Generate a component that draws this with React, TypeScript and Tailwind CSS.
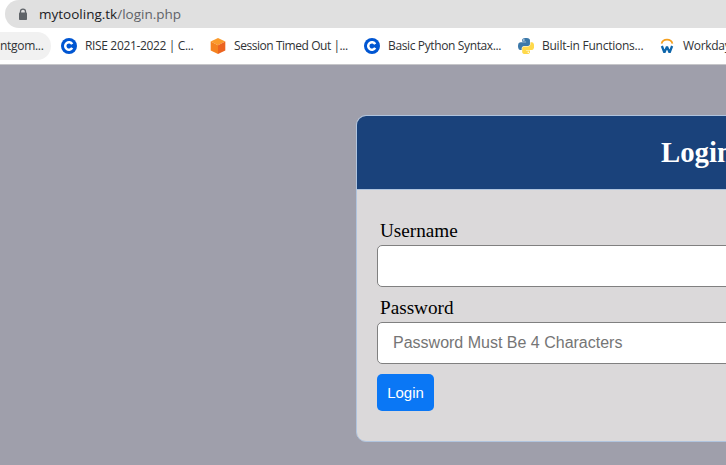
import type { ReactNode } from "react";

function CourseraIcon() {
  return (
    <svg width="16" height="16" viewBox="0 0 16 16">
      <circle cx="8" cy="8" r="8" fill="#0056d2" />
      <path d="M11.2 6.1A3.75 3.75 0 1 0 11.2 9.9" fill="none" stroke="#fff" strokeWidth="2.5" />
    </svg>
  );
}

function CubeIcon() {
  return (
    <svg width="16" height="16" viewBox="0 0 16 16">
      <path d="M8 0 15.3 3.6 8 7.3.7 3.6Z" fill="#fb9a2c" />
      <path d="M.7 3.6 8 7.3V16L.7 12.4Z" fill="#f58220" />
      <path d="M15.3 3.6 8 7.3V16l7.3-3.6Z" fill="#ec6420" />
    </svg>
  );
}

function PythonIcon() {
  return (
    <svg width="16" height="16" viewBox="0 0 110 110">
      <path
        fill="#3b78a9"
        d="M54.9 0c-4.6 0-9 .4-12.8 1.1C30.8 3.1 28.7 7.3 28.7 15v10.2h26.8v3.4H18.6C10.8 28.6 4 33.3 1.9 42.2c-2.5 10.2-2.6 16.6 0 27.3C3.8 77.4 8.3 83.1 16.1 83.1h9.2V70.9c0-8.9 7.7-16.7 16.7-16.7h26.8c7.4 0 13.4-6.1 13.4-13.6V15c0-7.3-6.1-12.7-13.4-13.9C64.2.3 59.5 0 54.9 0ZM40.4 8.2a5.1 5.1 0 1 1 0 10.2 5.1 5.1 0 0 1 0-10.2Z"
      />
      <path
        fill="#ffd94b"
        d="M85.6 28.7v11.9c0 9.2-7.8 17-16.7 17H42.1c-7.3 0-13.4 6.3-13.4 13.6v25.5c0 7.3 6.3 11.5 13.4 13.6 8.5 2.5 16.6 2.9 26.8 0 6.7-2 13.4-5.9 13.4-13.6V86.5H55.5v-3.4h40.2c7.8 0 10.7-5.4 13.4-13.6 2.8-8.4 2.7-16.5 0-27.3-1.9-7.8-5.6-13.6-13.4-13.6ZM70.5 93.3a5.1 5.1 0 1 1 0 10.2 5.1 5.1 0 0 1 0-10.2Z"
      />
    </svg>
  );
}

function WorkdayIcon() {
  return (
    <svg width="14" height="16" viewBox="0 0 14 16" fill="none" className="shrink-0">
      <path d="M1.6 5.6C2.3 2.8 4.4 1.7 7 1.7s4.7 1.1 5.4 3.9" stroke="#f5a01f" strokeWidth="1.8" />
      <path d="M1.9 8 4.4 14.6 7 8.6l2.6 6L12.100 8" stroke="#0e66ab" strokeWidth="2.3" strokeLinejoin="bevel" />
    </svg>
  );
}

function Bookmark({ icon, label, className }: { icon: ReactNode; label: string; className: string }) {
  return (
    <div className={`flex h-7 shrink-0 items-center gap-2 ${className}`}>
      <span className="flex w-4 shrink-0 justify-center">{icon}</span>
      <span className="whitespace-nowrap">{label}</span>
    </div>
  );
}

export default function App() {
  return (
    <div className="flex h-[465px] w-[726px] flex-col overflow-hidden bg-[#9f9fab]">
      <header className="h-[65px] shrink-0 border-b border-[#c6c6c9] bg-white font-['Open_Sans',sans-serif] text-[#303336]">
        <div className="ml-[5px] flex h-7 items-center rounded-l-full bg-[#e0e0e0] pl-[13px]">
          <svg width="10" height="13" viewBox="0 0 10 13" className="mr-[11px]">
            <path d="M2.5 5V3.6a2.5 2.5 0 0 1 5 0V5" fill="none" stroke="#5f6368" strokeWidth="1.3" />
            <rect x="1" y="4.5" width="8" height="7.5" rx="0.8" fill="#5f6368" />
          </svg>
          <span className="text-[13.5px] text-[#5f6368]">
            <span className="text-[#202124]">mytooling.tk</span>/login.php
          </span>
        </div>
        <div className="flex pt-1 text-[12px] tracking-[-0.3px]">
          <div className="mr-[10px] flex h-7 w-[51px] shrink-0 items-center rounded-r-full bg-[#f1f1f1]">ntgom...</div>
          <Bookmark icon={<CourseraIcon />} label="RISE 2021-2022 | C..." className="w-[149px] tracking-[-0.35px]" />
          <Bookmark icon={<CubeIcon />} label="Session Timed Out |..." className="w-[154px] tracking-[-0.45px]" />
          <Bookmark icon={<CourseraIcon />} label="Basic Python Syntax..." className="w-[154px] tracking-[-0.37px]" />
          <Bookmark icon={<PythonIcon />} label="Built-in Functions..." className="w-[141px] tracking-[-0.25px]" />
          <Bookmark icon={<WorkdayIcon />} label="Workday" className="w-[120px]" />
        </div>
      </header>
      <main className="pl-[356px] pt-[50px] font-['Liberation_Serif',serif] text-[19.2px] text-black">
        <section className="h-[327px] w-[680px] overflow-hidden rounded-[10px] border border-[#b0c4de] bg-[#dbd9da]">
          <h1 className="flex h-[74px] items-center border-b border-[#b0c4de] bg-[#1a427b] pl-[304px] text-[28.8px] font-bold text-white">
            Login
          </h1>
          <form className="px-5 pt-[30px]" onSubmit={(e) => e.preventDefault()}>
            <label htmlFor="username" className="ml-[3px] block h-[25px] leading-[21px]">Username</label>
            <input
              id="username"
              className="mb-[10px] block h-[42px] w-full rounded-[5px] border border-[#808080] bg-white px-[15px] font-['Liberation_Sans',sans-serif] text-base"
            />
            <label htmlFor="password" className="ml-[3px] block h-[25px] leading-[21px]">Password</label>
            <input
              id="password"
              type="password"
              placeholder="Password Must Be 4 Characters"
              className="block h-[42px] w-full rounded-[5px] border border-[#808080] bg-white px-[15px] font-['Liberation_Sans',sans-serif] text-base placeholder:text-[#757575]"
            />
            <button className="mt-[10px] h-[37px] w-[57px] rounded-[5px] bg-[#0a77f5] pt-[2px] font-['Liberation_Sans',sans-serif] text-[15px] text-white">
              Login
            </button>
          </form>
        </section>
      </main>
    </div>
  );
}
